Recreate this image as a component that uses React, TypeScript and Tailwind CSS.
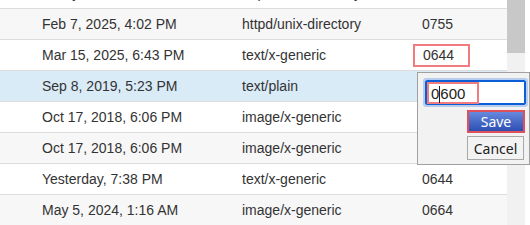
import React from 'react';

type Row = { date: string; mime: string; perm: string; bg: string };

const rows: Row[] = [
  { date: 'Today, 9:12 AM', mime: 'httpd/unix-directory', perm: '0755', bg: 'bg-white' },
  { date: 'Feb 7, 2025, 4:02 PM', mime: 'httpd/unix-directory', perm: '0755', bg: 'bg-[#f7f7f7]' },
  { date: 'Mar 15, 2025, 6:43 PM', mime: 'text/x-generic', perm: '0644', bg: 'bg-white' },
  { date: 'Sep 8, 2019, 5:23 PM', mime: 'text/plain', perm: '', bg: 'bg-[#d9ebf7]' },
  { date: 'Oct 17, 2018, 6:06 PM', mime: 'image/x-generic', perm: '', bg: 'bg-white' },
  { date: 'Oct 17, 2018, 6:06 PM', mime: 'image/x-generic', perm: '', bg: 'bg-[#f7f7f7]' },
  { date: 'Yesterday, 7:38 PM', mime: 'text/x-generic', perm: '0644', bg: 'bg-white' },
  { date: 'May 5, 2024, 1:16 AM', mime: 'image/x-generic', perm: '0664', bg: 'bg-[#f7f7f7]' },
];

export default function App() {
  return (
    <div className="relative w-[530px] h-[225px] overflow-hidden bg-white text-[14px] text-[#333] font-['Liberation_Sans',Arial,sans-serif]">
      <div className="flex h-full">
        <div className="w-[507px] h-full overflow-hidden">
          <div className="-mt-[22px]">
            {rows.map((r, i) => (
              <div key={i} className={`flex items-center h-[31px] border-b border-[#dddddd] ${r.bg}`}>
                <div className="w-[242px] pl-[42px] whitespace-nowrap">{r.date}</div>
                <div className="w-[180px] whitespace-nowrap">{r.mime}</div>
                <div className="flex-1 whitespace-nowrap">
                  {i === 2 ? (
                    <span className="-ml-[9px] inline-flex items-center h-[23px] w-[57px] pl-[8px] border-2 border-[#f07c80]">{r.perm}</span>
                  ) : (
                    r.perm
                  )}
                </div>
              </div>
            ))}
          </div>
        </div>
        <div className="w-[18px] h-full bg-[#f1f1f1]">
          <div className="h-[53px] bg-[#c8c8c8]" />
        </div>
      </div>

      <div className="absolute left-[417px] top-[72px] w-[113px] h-[93px] bg-[#f2f2f2] border border-[#a0a0a0] pt-[5px] pl-[5px] pr-[3px]">
        <div className="relative h-[29px] w-[105px] rounded-[3px] border-2 border-[#b8cdee] bg-white">
          <div className="absolute inset-0 rounded-[2px] border-2 border-[#0b5ed7]" />
          <div className="absolute left-[2px] top-[2px] w-[52px] h-[22px] border-2 border-[#f07c80]" />
          <div className="absolute left-[6px] top-[5px] text-[15px] leading-[18px] text-[#222] flex items-center">
            <span>0</span>
            <span className="w-px h-[17px] bg-[#222]" />
            <span>600</span>
          </div>
        </div>
        <div className="flex flex-col items-end pr-[1px] mt-[3px] gap-[3px] font-['Noto_Sans',sans-serif] text-[14px]">
          <div className="w-[58px] h-[23px] flex items-center justify-center text-white bg-gradient-to-b from-[#6788dc] to-[#2d4fb3] border-2 border-[#e0505a]">
            Save
          </div>
          <div className="w-[57px] h-[24px] mr-[1px] flex items-center justify-center text-[#222] bg-[#f3f3f3] border border-[#a8a8a8]">
            Cancel
          </div>
        </div>
      </div>
    </div>
  );
}
